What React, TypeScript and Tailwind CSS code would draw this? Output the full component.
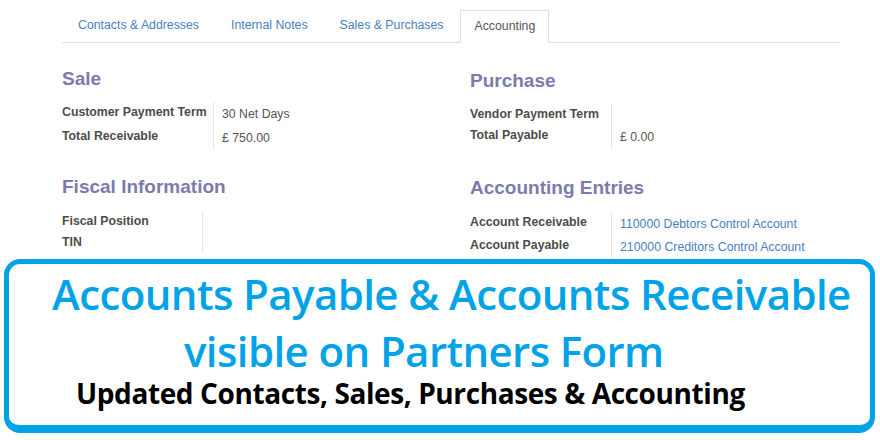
import React from "react";

const Row = ({
  label,
  value,
  link,
  labelW,
  h,
}: {
  label: string;
  value?: string;
  link?: boolean;
  labelW: string;
  h: string;
}) => (
  <div className={`flex ${h}`}>
    <div className={`${labelW} shrink-0 border-r border-[#e6e6e6] text-[12.3px] font-bold text-[#4c4c4c] leading-[20px] whitespace-nowrap`}>
      {label}
    </div>
    <div
      className={`pl-2 pt-[2px] text-[12.3px] leading-[20px] whitespace-nowrap ${link ? "text-[#4a7fc1]" : "text-[#555]"}`}
    >
      {value}
    </div>
  </div>
);

export default function App() {
  const tabs = ["Contacts & Addresses", "Internal Notes", "Sales & Purchases"];
  return (
    <div
      className="relative w-[880px] h-[440px] bg-white overflow-hidden"
      style={{ fontFamily: '"Liberation Sans", Arial, sans-serif' }}
    >
      <div className="ml-[62px] w-[778px] pt-[10px]">
        <div className="flex h-[33px] border-b border-[#dddddd]">
          {tabs.map((t) => (
            <div key={t} className="px-4 pt-[6px] text-[12.3px] text-[#4a7fc1] whitespace-nowrap">
              {t}
            </div>
          ))}
          <div className="ml-[1px] px-[13px] pt-[6px] text-[12.3px] text-[#555] bg-white border border-[#dddddd] border-b-white h-[33px]">
            Accounting
          </div>
        </div>
        <div className="grid grid-cols-[408px_370px]">
          <div className="flex flex-col">
            <div className="mt-[24px] text-[19px] font-bold text-[#7c7bad] leading-[23px]">Sale</div>
            <div className="mt-[12px]">
              <Row label="Customer Payment Term" value="30 Net Days" labelW="w-[152px]" h="h-[24px]" />
              <Row label="Total Receivable" value="£ 750.00" labelW="w-[152px]" h="h-[24px]" />
            </div>
            <div className="mt-[25px] text-[19px] font-bold text-[#7c7bad] leading-[23px]">Fiscal Information</div>
            <div className="mt-[13px]">
              <Row label="Fiscal Position" labelW="w-[141px]" h="h-[21px]" />
              <Row label="TIN" labelW="w-[141px]" h="h-[21px]" />
            </div>
          </div>
          <div className="flex flex-col">
            <div className="mt-[26px] text-[19px] font-bold text-[#7c7bad] leading-[23px]">Purchase</div>
            <div className="mt-[12px]">
              <Row label="Vendor Payment Term" labelW="w-[142px]" h="h-[21px]" />
              <Row label="Total Payable" value="£ 0.00" labelW="w-[142px]" h="h-[24px]" />
            </div>
            <div className="mt-[27px] text-[19px] font-bold text-[#7c7bad] leading-[23px]">Accounting Entries</div>
            <div className="mt-[13px]">
              <Row label="Account Receivable" value="110000 Debtors Control Account" link labelW="w-[142px]" h="h-[23px]" />
              <Row label="Account Payable" value="210000 Creditors Control Account" link labelW="w-[142px]" h="h-[24px]" />
              <Row label="" labelW="w-[142px]" h="h-[24px]" />
            </div>
          </div>
        </div>
      </div>

      <div
        className="absolute left-[4px] top-[259px] w-[871px] h-[174px] bg-white border-[5px] border-b-[8px] border-[#00a3e8] rounded-[16px] flex flex-col"
        style={{ fontFamily: '"Open Sans", "Noto Sans", sans-serif' }}
      >
        <div className="ml-[43px] mt-[5px] text-[42px] font-semibold leading-[50px] tracking-[-0.6px] text-[#00a3e8] whitespace-nowrap">
          Accounts Payable &amp; Accounts Receivable
        </div>
        <div className="ml-[175px] mt-[9px] text-[42px] font-semibold leading-[46px] tracking-[-0.6px] text-[#00a3e8] whitespace-nowrap">
          visible on Partners Form
        </div>
        <div className="ml-[67px] mt-[1px] text-[28px] font-bold leading-[36px] tracking-[-0.4px] text-black whitespace-nowrap">
          Updated Contacts, Sales, Purchases &amp; Accounting
        </div>
      </div>
    </div>
  );
}
